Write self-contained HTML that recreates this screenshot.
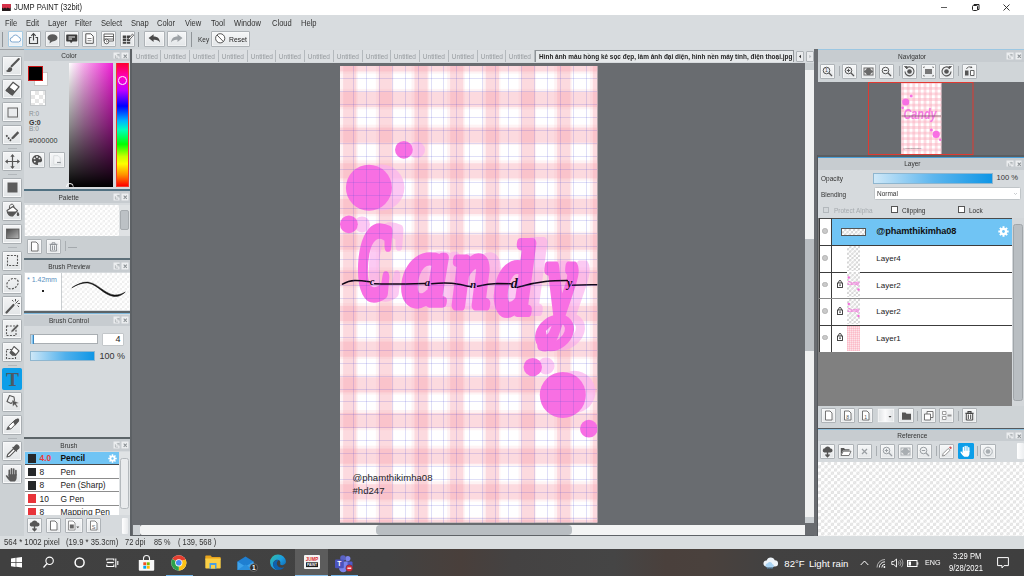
<!DOCTYPE html>
<html lang="en">
<head>
<meta charset="utf-8">
<title>JUMP PAINT (32bit)</title>
<style>
*{box-sizing:border-box;margin:0;padding:0}
html,body{width:1024px;height:576px;overflow:hidden;background:#fff}
body{position:relative;font-family:"Liberation Sans","DejaVu Sans",sans-serif;font-size:8.5px;color:#222;line-height:1}
.abs{position:absolute}
svg{display:block;overflow:visible}
#titlebar{left:0;top:0;width:1024px;height:15px;background:#fff}
#menubar{left:0;top:15px;width:1024px;height:15px;background:#d8dcdf}
#toolbar{left:0;top:30px;width:1024px;height:19px;background:linear-gradient(to right,#d0d5d8 210px,#d8dcdf 210px)}
#main{left:0;top:49px;width:1024px;height:487px}
#mainbg{left:0;top:49px;width:1024px;height:487px;background:#d0d5d8}
#statusbar{left:0;top:536px;width:1024px;height:13px;background:#d9dddf}
#taskbar{left:0;top:549px;width:1024px;height:27px;background:#343434}
.t{position:absolute;white-space:nowrap}
.btn{position:absolute;width:15px;height:15px;background:linear-gradient(#f6f7f8,#e3e6e8);border:1px solid #aeb3b7;border-radius:1px;box-shadow:inset 0 0 0 .6px #fafbfb}
.btn svg{position:absolute;left:0;top:0;width:13px;height:13px}
.tool{position:absolute;left:2px;width:20px;height:20.3px;background:linear-gradient(#f3f4f5,#e2e5e7);border:1px solid #a9aeb2;border-radius:1.5px;box-shadow:inset 0 0 0 1px #f8f9fa}
.tool svg{position:absolute;left:.5px;top:.6px;width:17px;height:17px}
.panel{position:absolute;background:#d6dadd}
.phead{position:absolute;left:0;top:0;height:12px;width:100%;background:#c7ccd0;border-top:1px solid #9cc7e2;text-align:center;font-size:7.5px;color:#333}
.phead span{position:relative;top:2px;display:inline-block;transform:scaleX(.87)}
.n{transform:scaleX(.9);transform-origin:0 50%}
.hic{position:absolute;top:1.5px;width:7.5px;height:7.5px;background:#eceef0;border:.5px solid #d9dcdf;border-radius:1.2px}
.hic svg{position:absolute;left:0;top:0;width:6.5px;height:6.5px}
.checker{background-color:#fff;background-image:linear-gradient(45deg,#e6e6e6 25%,transparent 25%,transparent 75%,#e6e6e6 75%),linear-gradient(45deg,#e6e6e6 25%,transparent 25%,transparent 75%,#e6e6e6 75%);background-size:7px 7px;background-position:0 0,3.5px 3.5px}
.menu{top:3.5px;font-size:8.6px;color:#333;transform:scaleX(.88);transform-origin:0 0}
.tab{position:absolute;top:1px;height:12px;width:28.75px;border-right:1px solid #b4b9bd;background:#dcdfe2;color:#969b9f;font-size:7px;text-align:center;overflow:hidden}
.tab span{position:relative;top:3px}
.sep{position:absolute;width:1px;background:#a9aeb2}
.thc{background-image:linear-gradient(45deg,#d4d4d4 25%,transparent 25%,transparent 75%,#d4d4d4 75%),linear-gradient(45deg,#d4d4d4 25%,transparent 25%,transparent 75%,#d4d4d4 75%)}
</style>
</head>
<body>
<!-- ===== title bar ===== -->
<div id="titlebar" class="abs">
  <svg class="abs" style="left:2.2px;top:3.8px" width="8.8" height="7" viewBox="0 0 8.8 7"><rect width="8.8" height="7" fill="#241a1c"/><path d="M0 0h8.8v3.6L7.3 4.6 5.8 3.6 4.4 4.6 3 3.6 1.5 4.6 0 3.6z" fill="#d8324a"/></svg>
  <div class="t" style="left:14px;top:3.9px;font-size:8.2px;color:#1a1a1a;transform:scaleX(.928);transform-origin:0 0">JUMP PAINT (32bit)</div>
  <svg class="abs" style="left:940px;top:3px" width="80" height="10" viewBox="0 0 80 10">
    <path d="M1 4.5h6" stroke="#333" stroke-width=".8" fill="none"/>
    <rect x="32.5" y="2.5" width="5" height="5" rx="1" stroke="#222" stroke-width="1" fill="none"/><path d="M34 2.5v-1h5v5h-1.4" stroke="#222" stroke-width="1" fill="none"/>
    <path d="M63.5 1.5l6 6M69.5 1.5l-6 6" stroke="#222" stroke-width=".9" fill="none"/>
  </svg>
</div>
<!-- ===== menu bar ===== -->
<div id="menubar" class="abs">
  <div class="t menu" style="left:4.5px">File</div>
  <div class="t menu" style="left:25.5px">Edit</div>
  <div class="t menu" style="left:47.5px">Layer</div>
  <div class="t menu" style="left:74.5px">Filter</div>
  <div class="t menu" style="left:100.5px">Select</div>
  <div class="t menu" style="left:130.5px">Snap</div>
  <div class="t menu" style="left:156.5px">Color</div>
  <div class="t menu" style="left:184.5px">View</div>
  <div class="t menu" style="left:211px">Tool</div>
  <div class="t menu" style="left:234px">Window</div>
  <div class="t menu" style="left:272px">Cloud</div>
  <div class="t menu" style="left:301px">Help</div>
</div>
<!-- ===== toolbar ===== -->
<div id="toolbar" class="abs">
  <div class="sep" style="left:2px;top:2px;height:15px;background:#8f9498"></div>
  <div class="btn" style="left:7.5px;top:1.3px;height:15.8px;border-color:#a6cbe3;background:linear-gradient(#f9fbfd,#e8eff5)"><svg viewBox="0 0 13 13"><path d="M3.6 10a2.3 2.3 0 01-.2-4.6 3.2 3.2 0 016.1-.3 2.5 2.5 0 01.2 4.9z" fill="#fff" stroke="#7fa8cf" stroke-width="1"/></svg></div>
  <div class="btn" style="left:26.2px;top:1.3px;height:15.8px"><svg viewBox="0 0 13 13"><path d="M4.5 5.5h-2v6h8v-6h-2" fill="none" stroke="#444" stroke-width="1.1"/><path d="M6.5 8.5v-6.5M4.3 3.8l2.2-2.3 2.2 2.3" fill="none" stroke="#444" stroke-width="1.1"/></svg></div>
  <div class="btn" style="left:44.9px;top:1.3px;height:15.8px"><svg viewBox="0 0 13 13"><ellipse cx="6.5" cy="5.8" rx="5" ry="3.6" fill="#5a5a5a"/><path d="M4 8.5l-.5 3 3-2.3z" fill="#5a5a5a"/></svg></div>
  <div class="btn" style="left:63.6px;top:1.3px;height:15.8px"><svg viewBox="0 0 13 13"><path d="M2 2.5h9.5a.8.8 0 01.8.8v5.4a.8.8 0 01-.8.8h-4l-1.5 1.8-1-1.8h-3a.8.8 0 01-.8-.8v-5.4a.8.8 0 01.8-.8z" fill="#3c3c3c"/><path d="M3.5 5h6.5M3.5 7h3.5" stroke="#f0f0f0" stroke-width="1"/></svg></div>
  <div class="btn" style="left:82.3px;top:1.3px;height:15.8px"><svg viewBox="0 0 13 13"><path d="M2.8 1.8h5l2.5 2.5v7h-7.5z" fill="#fff" stroke="#555" stroke-width="1" stroke-linejoin="round"/><path d="M4.5 6.5h4M4.5 8.7h4" stroke="#666" stroke-width=".8"/></svg></div>
  <div class="btn" style="left:101px;top:1.3px;height:15.8px"><svg viewBox="0 0 13 13"><path d="M2 2h9.5v7h-9.5zM2 4.5h9.5M2 7h9.5" fill="#fff" stroke="#555" stroke-width=".9"/><circle cx="4.5" cy="9.5" r="2.3" fill="#fff" stroke="#555" stroke-width=".9"/><path d="M4.5 8.3v1.4h1" stroke="#555" stroke-width=".7" fill="none"/></svg></div>
  <div class="btn" style="left:119.7px;top:1.3px;height:15.8px"><svg viewBox="0 0 13 13"><path d="M1.8 3.5h3.4v2.4h-3.4zM5.9 3.5h3.3v2.4h-3.3zM1.8 6.6h3.4v2.4h-3.4zM5.9 6.6h3.3v2.4h-3.3zM1.8 9.7h3.4v2h-3.4zM5.9 9.7h3.3v2h-3.3z" fill="#444"/><path d="M7.5 6.5l4-4.5 1.2 1-4 4.5-1.6.5z" fill="#fff" stroke="#444" stroke-width=".8"/></svg></div>
  <div class="sep" style="left:138px;top:2px;height:15px;background:#8f9498"></div>
  <div class="btn" style="left:144.4px;top:1.3px;height:15.8px;width:20.2px"><svg viewBox="0 0 18 13" style="width:18.2px"><path d="M3.5 6l5-3.8v2.3c4 0 6 2 6.5 6-1.5-2.3-3.5-3-6.5-2.8v2.3z" fill="#4a4a4a"/></svg></div>
  <div class="btn" style="left:167.4px;top:1.3px;height:15.8px;width:20px"><svg viewBox="0 0 18 13" style="width:18px"><path d="M14.5 6l-5-3.8v2.3c-4 0-6 2-6.5 6 1.5-2.3 3.5-3 6.5-2.8v2.3z" fill="#9da2a6"/></svg></div>
  <div class="sep" style="left:190.6px;top:2px;height:15px;background:#8f9498"></div>
  <div class="t n" style="left:198px;top:6px;font-size:7.2px;color:#333">Key</div>
  <div class="btn" style="left:211.4px;top:1.3px;height:15.8px;width:39px"><svg viewBox="0 0 37 13" style="width:37px"><circle cx="8.2" cy="6.3" r="4.6" fill="#fff" stroke="#444" stroke-width=".9"/><path d="M5 3l6.4 6.6" stroke="#444" stroke-width=".9"/></svg><span class="t n" style="left:16.8px;top:3.3px;font-size:7.6px;color:#222">Reset</span></div>
</div>
<div id="mainbg" class="abs"></div>
<!-- ===== tool column ===== -->
<div id="toolcol" class="abs" style="left:0;top:49px;width:24px;height:487px;background:#ccd1d4">
  <div class="abs" style="left:0;top:0;width:24px;height:1px;background:#9da2a6"></div>
  <!-- brush -->
  <div class="tool" style="top:6.7px"><svg viewBox="0 0 17 17"><path d="M14.8 2L7.6 9.300" stroke="#555" stroke-width="2.100" stroke-linecap="round" fill="none"/><path d="M1.800 13.800c1.600-.2 2.100-1.300 2.600-2.500.7-1.500 2.700-1.500 3.500-.3.900 1.500 0 3.300-1.900 3.900-1.600.5-3.300.1-4.200-1.100z" fill="#555"/></svg></div>
  <!-- eraser -->
  <div class="tool" style="top:29.9px"><svg viewBox="0 0 17 17"><path d="M9 2.300l6 4.500-6.800 8.200-6-4.500z" fill="#fff" stroke="#555" stroke-width="1.300" stroke-linejoin="round"/><path d="M5 7.200l6 4.500-2.800 3.300-6-4.500z" fill="#555" stroke="#555" stroke-width="1" stroke-linejoin="round"/></svg></div>
  <!-- shape rect -->
  <div class="tool" style="top:53.0px"><svg viewBox="0 0 17 17"><rect x="4" y="4" width="9.5" height="9" fill="#e9ebed" stroke="#666" stroke-width="1"/></svg></div>
  <!-- polyline pen -->
  <div class="tool" style="top:76px"><svg viewBox="0 0 17 17"><path d="M2.300 8.300l4 5 2.500-2.800" stroke="#444" stroke-width="1.700" stroke-dasharray="1.700 1.200" fill="none"/><path d="M8.300 9.800l5.200-5.500 1.700 1.600-5.300 5.500-2.300.8z" fill="#555"/></svg></div>
  <div class="abs" style="left:8px;top:98.7px;width:9px;height:1px;background:#b2b7bb"></div>
  <!-- move -->
  <div class="tool" style="top:102.2px"><svg viewBox="0 0 17 17"><path d="M8.5 2v13M2 8.5h13" stroke="#555" stroke-width="1.2" fill="none"/><path d="M8.5 1l2.2 2.8H6.3zM8.5 16l2.2-2.8H6.3zM1 8.5l2.8-2.2v4.4zM16 8.5l-2.8-2.2v4.4z" fill="#555"/></svg></div>
  <div class="abs" style="left:8px;top:125.0px;width:9px;height:1px;background:#b2b7bb"></div>
  <!-- fill rect -->
  <div class="tool" style="top:128.5px"><svg viewBox="0 0 17 17"><rect x="3.5" y="3.5" width="10" height="10" fill="#5c5c5c"/></svg></div>
  <!-- bucket -->
  <div class="tool" style="top:151.7px"><svg viewBox="0 0 17 17"><path d="M3 8.5l6-4 4.5 4.2-5 5.3c-2.5.5-5.2-2-5.5-5.5z" fill="#fff" stroke="#555" stroke-width="1.1" stroke-linejoin="round"/><path d="M3.2 9.5h9.5l-4.2 4.4c-2.6.3-4.7-1.7-5.3-4.4z" fill="#555"/><path d="M5.5 6.5c-.5-2.5.8-4.3 2.3-4.3s2.3 1.3 2 3" stroke="#555" stroke-width="1" fill="none"/><path d="M13.8 9.5c.9 1.3 1.5 2.3 1.5 3.2a1.3 1.3 0 01-2.6 0c0-.9.4-1.9 1.1-3.2z" fill="#555"/></svg></div>
  <!-- gradient -->
  <div class="tool" style="top:174.7px"><svg viewBox="0 0 17 17"><defs><linearGradient id="gt" x1="0" y1="0" x2="1" y2="1"><stop offset="0" stop-color="#4a4a4a"/><stop offset="1" stop-color="#b5b5b5"/></linearGradient></defs><rect x="2.5" y="4" width="12.5" height="9.5" fill="url(#gt)" stroke="#555" stroke-width=".8"/></svg></div>
  <div class="abs" style="left:8px;top:197.7px;width:9px;height:1px;background:#b2b7bb"></div>
  <!-- select rect -->
  <div class="tool" style="top:201.5px"><svg viewBox="0 0 17 17"><rect x="3.5" y="3.5" width="10" height="10" fill="none" stroke="#555" stroke-width="1.1" stroke-dasharray="2 1.3"/></svg></div>
  <!-- lasso -->
  <div class="tool" style="top:224.5px"><svg viewBox="0 0 17 17"><ellipse cx="8.5" cy="8.7" rx="6.2" ry="4.7" transform="rotate(-35 8.5 8.7)" fill="none" stroke="#555" stroke-width="1.1" stroke-dasharray="2 1.3"/></svg></div>
  <!-- wand -->
  <div class="tool" style="top:247.2px"><svg viewBox="0 0 17 17"><path d="M2.5 14.5l7-7.5" stroke="#555" stroke-width="2.2" stroke-linecap="round"/><path d="M11.5 5.5l3-3M11.5 3.3V1M13.7 5.5H16M9.5 3.5l-1.5-1.5M13.5 7.5l1.5 1.5" stroke="#555" stroke-width="1"/></svg></div>
  <!-- select pen -->
  <div class="tool" style="top:270.2px"><svg viewBox="0 0 17 17"><rect x="2.5" y="5" width="9.5" height="9.5" fill="none" stroke="#555" stroke-width="1.1" stroke-dasharray="2 1.3"/><path d="M7.5 9.3l5.8-6 1.6 1.5-5.9 6-2.2.8z" fill="#555" stroke="#eef0f1" stroke-width=".5"/></svg></div>
  <!-- select eraser -->
  <div class="tool" style="top:293.0px"><svg viewBox="0 0 17 17"><rect x="2.5" y="5.5" width="9" height="9" fill="none" stroke="#555" stroke-width="1.1" stroke-dasharray="2 1.3"/><path d="M10 2.5l5 4.3-3.6 4.5H8.6L6 8.7z" fill="#fff" stroke="#555" stroke-width="1.1" stroke-linejoin="round"/><path d="M7.7 6.5l4.6 3.8-1 1H8.6L6 8.7z" fill="#555"/></svg></div>
  <div class="abs" style="left:8px;top:315.7px;width:9px;height:1px;background:#b2b7bb"></div>
  <!-- text (active) -->
  <div class="tool" style="top:319.2px;background:#0c9ee9;border-color:#0c9ee9;height:22px;box-shadow:none"><svg viewBox="0 0 17 17"><text x="8.5" y="16" text-anchor="middle" font-family="'Liberation Serif',serif" font-size="19.5" font-weight="bold" fill="#4b5b66">T</text></svg></div>
  <!-- operation -->
  <div class="tool" style="top:342.7px"><svg viewBox="0 0 17 17"><path d="M5.5 2.5l4.5 1.5 .5 3.5-3.5 3-4-2z" fill="none" stroke="#555" stroke-width="1.1" stroke-linejoin="round"/><path d="M8 7l7 3-3 .8 2 3-1.3.8-1.9-3-2 2z" fill="#555" stroke="#eef0f1" stroke-width=".4"/></svg></div>
  <!-- divide / marker -->
  <div class="tool" style="top:365.9px"><svg viewBox="0 0 17 17"><path d="M2.8 13.5l1.7-3.3 7-6.5c1.2-1 3.2.8 2.2 2.2l-6.7 7z" fill="#fff" stroke="#555" stroke-width="1"/><path d="M8.8 5.6l5-3.4c1.4.3 1.8 1.7 1 3.2l-3.6 4z" fill="#555"/><path d="M2.8 13.5l1.7-3.3 2 2.3z" fill="#555"/></svg></div>
  <div class="abs" style="left:8px;top:389.0px;width:9px;height:1px;background:#b2b7bb"></div>
  <!-- eyedropper -->
  <div class="tool" style="top:392.2px"><svg viewBox="0 0 17 17"><path d="M3 14l.7-2.5 6-6 1.8 1.8-6 6z" fill="#fff" stroke="#555" stroke-width="1.1" stroke-linejoin="round"/><path d="M9 4.5l3.5 3.5M12 2.2c1-1 3.8 1.5 2.8 2.8l-2.5 2.2-2.5-2.5z" fill="#555" stroke="#555" stroke-width="1.3" stroke-linecap="round"/></svg></div>
  <!-- hand -->
  <div class="tool" style="top:415.2px"><svg viewBox="0 0 17 17"><path d="M5.300 9.500V4.300M7.500 8.500V2.800M9.700 8.500V3M11.900 9V4.600" stroke="#5a5a5a" stroke-width="1.650" stroke-linecap="round" fill="none"/><path d="M4.500 8.300h8.200v3.200c0 1.900-.9 3.300-1.900 4H6.400C5 14.500 3.100 12.100 1.900 10.300c-.5-.9.600-1.600 1.400-.8L4.500 10.900z" fill="#5a5a5a"/></svg></div>
</div>
<!-- ===== left panels ===== -->
<div id="leftpanels" class="abs" style="left:24px;top:49px;width:106px;height:487px;background:#d6dadd">
  <!-- Color panel -->
  <div class="panel" style="left:0;top:0;width:106px;height:140px">
    <div class="phead"><span style="left:-8px">Color</span>
      <div class="hic" style="left:88.5px"><svg viewBox="0 0 7 7"><path d="M1.5 2.5v3h3M3 1.5h2.5V4M5.5 1.5L3.2 3.8" stroke="#9aa0a4" stroke-width=".7" fill="none"/></svg></div>
      <div class="hic" style="left:97px"><svg viewBox="0 0 7 7"><path d="M1.8 1.8l3.4 3.4M5.2 1.8L1.8 5.2" stroke="#8b9195" stroke-width="1.1" fill="none"/></svg></div>
    </div>
    <div class="abs" style="left:9.5px;top:22.5px;width:14.5px;height:14px;background:#fff;border:.5px solid #c8c8c8"></div>
    <div class="abs" style="left:3.8px;top:17px;width:15.2px;height:14.8px;background:#000;border:1.2px solid #c81414"></div>
    <div class="abs checker" style="left:6px;top:41.2px;width:15.8px;height:15.6px;border:1px solid #c3c7ca;background-size:8px 8px;background-position:0 0,4px 4px"></div>
    <div class="t" style="left:5px;top:62px;font-size:6.5px;color:#8a8f93">R:0</div>
    <div class="t" style="left:5px;top:69.5px;font-size:7px;color:#333;font-weight:bold">G:0</div>
    <div class="t" style="left:5px;top:76.5px;font-size:6.5px;color:#8a8f93">B:0</div>
    <div class="t" style="left:5px;top:87.8px;font-size:7.2px;color:#333;letter-spacing:.1px">#000000</div>
    <div class="btn" style="left:5.2px;top:103.2px;width:16px;height:16px"><svg viewBox="0 0 13 13" style="width:14px;height:14px"><path d="M6.5 1.8a4.7 4.7 0 100 9.4c1 0 1.2-.6.9-1.2-.4-.8.1-1.5 1-1.5h1.3c.9 0 1.5-.7 1.5-1.7 0-2.8-2.1-5-4.7-5z" fill="#4f4f4f"/><circle cx="4.2" cy="5" r=".9" fill="#f0f0f0"/><circle cx="6.5" cy="3.8" r=".9" fill="#f0f0f0"/><circle cx="8.8" cy="5" r=".9" fill="#f0f0f0"/><circle cx="4.5" cy="8" r=".9" fill="#f0f0f0"/></svg></div>
    <div class="btn" style="left:24.6px;top:103.2px;width:16px;height:16px"><svg viewBox="0 0 13 13" style="width:14px;height:14px"><path d="M3.5 2.5h4l2 2v6h-6z" fill="#f4f5f6" stroke="#d2d5d8" stroke-width=".7"/><path d="M6.5 8.8h3.5" stroke="#8c9195" stroke-width="1.1"/></svg></div>
    <!-- SV square -->
    <div class="abs" style="left:45.3px;top:14px;width:43.7px;height:124px;background:linear-gradient(to bottom,rgba(0,0,0,0) 0%,rgba(0,0,0,.46) 50%,rgba(0,0,0,.86) 88%,#000 100%),linear-gradient(to right,#fff 0%,#f8a8ec 35%,#f01fd6 100%)"></div>
    <!-- hue strip -->
    <div class="abs" style="left:91.8px;top:14px;width:13.5px;height:124px;border:1px solid #f03a2a;border-top:none;background:linear-gradient(to bottom,#ff0030 0%,#ff00c8 12%,#c000ff 22%,#0000ff 35%,#00b4ff 47%,#00ffc0 54%,#00ff00 66%,#c8ff00 76%,#ffff00 82%,#ff9000 91%,#ff0000 100%)"></div>
    <div class="abs" style="left:94.1px;top:27.3px;width:8.6px;height:8.6px;border:1.9px solid #fff;border-radius:50%"></div>
    <div class="abs" style="left:41.5px;top:133.8px;width:8px;height:8px;border:1.7px solid #fff;border-radius:50%;clip-path:inset(0 0 3.8px 0)"></div>
  </div>
  <div class="abs" style="left:0;top:139.5px;width:106px;height:2.5px;background:#517182"></div>
  <!-- Palette panel -->
  <div class="panel" style="left:0;top:142px;width:106px;height:67px">
    <div class="phead" style="border-top:none"><span style="left:-8px;top:2.5px">Palette</span>
      <div class="hic" style="left:88.5px;top:2px"><svg viewBox="0 0 7 7"><path d="M1.5 2.5v3h3M3 1.5h2.5V4M5.5 1.5L3.2 3.8" stroke="#9aa0a4" stroke-width=".7" fill="none"/></svg></div>
      <div class="hic" style="left:97px;top:2px"><svg viewBox="0 0 7 7"><path d="M1.8 1.8l3.4 3.4M5.2 1.8L1.8 5.2" stroke="#8b9195" stroke-width="1.1" fill="none"/></svg></div>
    </div>
    <div class="abs checker" style="left:.5px;top:13.5px;width:94px;height:31.5px;background-image:linear-gradient(45deg,#efefef 25%,transparent 25%,transparent 75%,#efefef 75%),linear-gradient(45deg,#efefef 25%,transparent 25%,transparent 75%,#efefef 75%);background-size:5px 5px;background-position:0 0,2.5px 2.5px"></div>
    <div class="abs" style="left:94.5px;top:13.5px;width:11.5px;height:31.5px;background:#dfe2e4"></div>
    <div class="abs" style="left:95.5px;top:19px;width:9.5px;height:20px;background:#bcc1c5;border:.5px solid #a6abaf;border-radius:2px"></div>
    <div class="abs" style="left:0;top:45px;width:106px;height:22px;background:#cacfd2"></div>
    <div class="btn" style="left:3px;top:48px"><svg viewBox="0 0 13 13"><path d="M3.5 2h4.5l2 2v7h-6.5z" fill="#fff" stroke="#666" stroke-width=".9" stroke-linejoin="round"/></svg></div>
    <div class="btn" style="left:21.5px;top:48px"><svg viewBox="0 0 13 13"><path d="M3.5 4.5h6v6.5h-6zM2.5 4.3h8M5 4V2.8h3V4M5.5 5.5v4.5M7.5 5.5v4.5" fill="none" stroke="#8b9094" stroke-width=".9"/></svg></div>
    <div class="sep" style="left:40.5px;top:50px;height:10px"></div>
    <div class="abs" style="left:44px;top:55.5px;width:9px;height:1px;background:#a4a9ad"></div>
  </div>
  <div class="abs" style="left:0;top:208.8px;width:106px;height:2.5px;background:#5c6e78"></div>
  <!-- Brush Preview panel -->
  <div class="panel" style="left:0;top:211.3px;width:106px;height:51px">
    <div class="phead" style="border-top:none"><span style="left:-8px;top:2.5px">Brush Preview</span>
      <div class="hic" style="left:88.5px;top:2px"><svg viewBox="0 0 7 7"><path d="M1.5 2.5v3h3M3 1.5h2.5V4M5.5 1.5L3.2 3.8" stroke="#9aa0a4" stroke-width=".7" fill="none"/></svg></div>
      <div class="hic" style="left:97px;top:2px"><svg viewBox="0 0 7 7"><path d="M1.8 1.8l3.4 3.4M5.2 1.8L1.8 5.2" stroke="#8b9195" stroke-width="1.1" fill="none"/></svg></div>
    </div>
    <div class="abs" style="left:.5px;top:12.5px;width:37px;height:37.5px;background:#fff;border-right:1px solid #c9cdd0"></div>
    <div class="t" style="left:3px;top:15.5px;font-size:7px;color:#5b8fc0">* 1.42mm</div>
    <div class="abs" style="left:18.3px;top:30.2px;width:1.4px;height:1.4px;background:#222"></div>
    <div class="abs checker" style="left:37.5px;top:12.5px;width:68.5px;height:37.5px;background-image:linear-gradient(45deg,#efefef 25%,transparent 25%,transparent 75%,#efefef 75%),linear-gradient(45deg,#efefef 25%,transparent 25%,transparent 75%,#efefef 75%);background-size:5px 5px;background-position:0 0,2.5px 2.5px"></div>
    <svg class="abs" style="left:37.5px;top:12.5px" width="68.5" height="37.5" viewBox="61.5 273 68.5 37.5"><path d="M71.3 287.8C77 284.5 83 282 88.5 283.2 97 285 104 295.5 113.5 296.5 118 297 122 294.5 124.8 292 121.5 294 118 295.2 114 295 105 294.3 98 284.3 89 282.4 83 281.2 77 284 71.3 287.8z" fill="#111" stroke="#111" stroke-width=".5"/></svg>
  </div>
  <div class="abs" style="left:0;top:262.3px;width:106px;height:2px;background:#5c6468"></div>
  <div class="abs" style="left:0;top:264.3px;width:106px;height:1.2px;background:#7fb8dc"></div>
  <!-- Brush Control panel -->
  <div class="panel" style="left:0;top:265.5px;width:106px;height:122px">
    <div class="phead" style="border-top:none;height:11.5px"><span style="left:-8px;top:2px">Brush Control</span>
      <div class="hic" style="left:88.5px"><svg viewBox="0 0 7 7"><path d="M1.5 2.5v3h3M3 1.5h2.5V4M5.5 1.5L3.2 3.8" stroke="#9aa0a4" stroke-width=".7" fill="none"/></svg></div>
      <div class="hic" style="left:97px"><svg viewBox="0 0 7 7"><path d="M1.8 1.8l3.4 3.4M5.2 1.8L1.8 5.2" stroke="#8b9195" stroke-width="1.1" fill="none"/></svg></div>
    </div>
    <div class="abs" style="left:6px;top:19.8px;width:67.5px;height:10.2px;background:#fff;border:1px solid #a9aeb2"></div>
    <div class="abs" style="left:6.8px;top:20.5px;width:3px;height:8.8px;background:linear-gradient(to right,#cfe6f6,#6cb6e6);border-right:1px solid #3a86c0"></div>
    <div class="abs" style="left:77.8px;top:18.8px;width:22px;height:12.5px;background:#fff;border:1px solid #c3c7ca;border-radius:1px"></div>
    <div class="t" style="left:91.5px;top:20.8px;font-size:9px;color:#222">4</div>
    <div class="abs" style="left:6px;top:36px;width:65px;height:10px;background:linear-gradient(to right,#cde7f8,#4fb0ec 55%,#0f96e6);border:1px solid #8fb6cf"></div>
    <div class="t" style="left:75.5px;top:37.3px;font-size:9px;color:#333">100 %</div>
  </div>
  <div class="abs" style="left:0;top:387.5px;width:106px;height:2.5px;background:#5c6468"></div>
  <!-- Brush panel -->
  <div class="panel" style="left:0;top:390px;width:106px;height:97px">
    <div class="phead" style="border-top:none"><span style="left:-8px;top:2.5px">Brush</span>
      <div class="hic" style="left:88.5px;top:2px"><svg viewBox="0 0 7 7"><path d="M1.5 2.5v3h3M3 1.5h2.5V4M5.5 1.5L3.2 3.8" stroke="#9aa0a4" stroke-width=".7" fill="none"/></svg></div>
      <div class="hic" style="left:97px;top:2px"><svg viewBox="0 0 7 7"><path d="M1.8 1.8l3.4 3.4M5.2 1.8L1.8 5.2" stroke="#8b9195" stroke-width="1.1" fill="none"/></svg></div>
    </div>
    <div class="abs" style="left:1px;top:13px;width:93.5px;height:62.8px;background:#fff;overflow:hidden;font-size:8.4px;color:#222">
      <div class="abs" style="left:0;top:0;width:93.5px;height:13.3px;background:#70c4f4;border-bottom:1px solid #4a4a4a"></div>
      <div class="abs" style="left:0;top:26px;width:93.5px;height:1px;background:#8d8d8d"></div>
      <div class="abs" style="left:0;top:39.3px;width:93.5px;height:1px;background:#8d8d8d"></div>
      <div class="abs" style="left:0;top:52.8px;width:93.5px;height:1px;background:#8d8d8d"></div>
      <div class="abs" style="left:2.5px;top:2.2px;width:8.5px;height:8.5px;background:#26282a"></div>
      <div class="abs" style="left:2.5px;top:15.7px;width:8.5px;height:8.5px;background:#26282a"></div>
      <div class="abs" style="left:2.5px;top:29px;width:8.5px;height:8.5px;background:#26282a"></div>
      <div class="abs" style="left:2.5px;top:42.4px;width:8.5px;height:8.5px;background:#e8343a"></div>
      <div class="abs" style="left:2.5px;top:55.7px;width:8.5px;height:8.5px;background:#e8343a"></div>
      <div class="t" style="left:14.5px;top:2.3px;color:#ee3a3a;font-weight:bold">4.0</div>
      <div class="t" style="left:14.5px;top:16px">8</div>
      <div class="t" style="left:14.5px;top:29.3px">8</div>
      <div class="t" style="left:14.5px;top:42.7px">10</div>
      <div class="t" style="left:14.5px;top:56px">8</div>
      <div class="t" style="left:35.5px;top:2.3px;font-weight:bold;color:#111">Pencil</div>
      <div class="t" style="left:35.5px;top:16px">Pen</div>
      <div class="t" style="left:35.5px;top:29.3px">Pen (Sharp)</div>
      <div class="t" style="left:35.5px;top:42.7px">G Pen</div>
      <div class="t" style="left:35.5px;top:56px">Mapping Pen</div>
      <svg class="abs" style="left:82.5px;top:2px" width="9" height="9" viewBox="0 0 10 10"><g fill="#fff"><circle cx="5" cy="5" r="3.3"/><g stroke="#fff" stroke-width="1.7"><path d="M5 .3v9.4M.3 5h9.4M1.7 1.7l6.6 6.6M8.3 1.7L1.7 8.3"/></g></g><circle cx="5" cy="5" r="1.3" fill="#70c4f4"/></svg>
    </div>
    <div class="abs" style="left:94.5px;top:13px;width:11.5px;height:63px;background:#dfe2e4"></div>
    <div class="abs" style="left:95.5px;top:19px;width:9.5px;height:50.5px;background:#e9ebed;border:.5px solid #b4b9bd;border-radius:2.5px"></div>
    <div class="btn" style="left:3px;top:78.8px"><svg viewBox="0 0 13 13"><path d="M3.3 7.5a2.2 2.2 0 01.5-4.3 3 3 0 015.6.3 2 2 0 01.3 4z" fill="#555"/><path d="M6.5 6v5.5M4.5 9.5l2 2.2 2-2.2" stroke="#555" stroke-width="1.4" fill="none"/></svg></div>
    <div class="btn" style="left:21.8px;top:78.8px"><svg viewBox="0 0 13 13"><path d="M3.5 2h4.5l2 2v7h-6.5z" fill="#fff" stroke="#666" stroke-width=".9" stroke-linejoin="round"/></svg></div>
    <div class="btn" style="left:40.8px;top:78.8px;width:18px"><svg viewBox="0 0 13 13"><path d="M2.5 2h4.5l2 2v7h-6.5z" fill="#fff" stroke="#888" stroke-width=".9" stroke-linejoin="round"/><rect x="3.8" y="5.5" width="4" height="4" fill="#666"/><path d="M10.3 7.5h3l-1.5 1.8z" fill="#555"/></svg></div>
    <div class="btn" style="left:62.2px;top:78.8px"><svg viewBox="0 0 13 13"><path d="M3.5 2h4.5l2 2v7h-6.5z" fill="#fff" stroke="#777" stroke-width=".9" stroke-linejoin="round"/><text x="6.7" y="9.8" font-size="5.5" text-anchor="middle" fill="#666" font-family="'Liberation Sans',sans-serif">S</text></svg></div>
    <div class="abs" style="left:98.2px;top:78.5px;width:5.5px;height:16px;background:linear-gradient(to right,#fff,#e8eaec);border-radius:1px"></div>
  </div>
</div>
<!-- ===== main area ===== -->
<div id="main" class="abs">
<div class="abs" style="left:130px;top:0;width:3px;height:487px;background:#696c70"></div>
<div class="abs" style="left:130.2px;top:0;width:2.3px;height:487px;background:#5d6165"></div>
<div id="canvasarea" class="abs" style="left:132px;top:0;width:692px;height:487px;background:#696c70">
<div class="abs" style="left:0;top:0;width:686px;height:14px;background:#d7dbde"></div>
<div class="tab" style="left:0.50px"><span style="display:inline-block;transform:scaleX(.93)">Untitled</span></div>
<div class="tab" style="left:29.25px"><span style="display:inline-block;transform:scaleX(.93)">Untitled</span></div>
<div class="tab" style="left:58.00px"><span style="display:inline-block;transform:scaleX(.93)">Untitled</span></div>
<div class="tab" style="left:86.75px"><span style="display:inline-block;transform:scaleX(.93)">Untitled</span></div>
<div class="tab" style="left:115.50px"><span style="display:inline-block;transform:scaleX(.93)">Untitled</span></div>
<div class="tab" style="left:144.25px"><span style="display:inline-block;transform:scaleX(.93)">Untitled</span></div>
<div class="tab" style="left:173.00px"><span style="display:inline-block;transform:scaleX(.93)">Untitled</span></div>
<div class="tab" style="left:201.75px"><span style="display:inline-block;transform:scaleX(.93)">Untitled</span></div>
<div class="tab" style="left:230.50px"><span style="display:inline-block;transform:scaleX(.93)">Untitled</span></div>
<div class="tab" style="left:259.25px"><span style="display:inline-block;transform:scaleX(.93)">Untitled</span></div>
<div class="tab" style="left:288.00px"><span style="display:inline-block;transform:scaleX(.93)">Untitled</span></div>
<div class="tab" style="left:316.75px"><span style="display:inline-block;transform:scaleX(.93)">Untitled</span></div>
<div class="tab" style="left:345.50px"><span style="display:inline-block;transform:scaleX(.93)">Untitled</span></div>
<div class="tab" style="left:374.25px"><span style="display:inline-block;transform:scaleX(.93)">Untitled</span></div>
<div class="tab" style="left:403px;width:258.5px;background:#e6e9eb;color:#222;font-weight:bold;font-size:7.1px;border:1px solid #8f9498;border-bottom:none;text-align:left;padding-left:3px;white-space:nowrap;letter-spacing:0"><span style="display:inline-block;transform:scaleX(.908);transform-origin:0 50%">Hình ảnh màu hồng kẻ sọc đẹp, làm ảnh đại diện, hình nền máy tính, điện thoại.jpg</span></div>
<div class="abs" style="left:663.5px;top:1.5px;width:8px;height:11px;background:#e9ebed;border:1px solid #aeb3b7;border-radius:1px"><svg width="6" height="9" viewBox="0 0 6 9"><path d="M4 2.7L2 4.5l2 1.8z" fill="#333"/></svg></div>
<div class="abs" style="left:674px;top:1.5px;width:8px;height:11px;background:#e9ebed;border:1px solid #aeb3b7;border-radius:1px"><svg width="6" height="9" viewBox="0 0 6 9"><path d="M2.3 2.7l2 1.8-2 1.8z" fill="#b5babd"/></svg></div>
<div class="abs" style="left:673px;top:14px;width:9px;height:460px;background:#f0f1f1"></div>
<div class="abs" style="left:673px;top:14px;width:9px;height:7px;background:#c9ced1"></div>
<div class="abs" style="left:673px;top:189.5px;width:9px;height:112px;background:#b9bec2"></div>
<div class="abs" style="left:673px;top:468px;width:9px;height:6px;background:#c9ced1"></div>
<div class="abs" style="left:.7px;top:475.9px;width:7px;height:9.8px;background:#cfd3d6"></div>
<div class="abs" style="left:7.5px;top:475.9px;width:665.5px;height:9.8px;background:#f3f4f4;border-radius:2px 0 0 2px"></div>
<div class="abs" style="left:0;top:485.7px;width:683px;height:1.3px;background:#5f6367"></div>
<div class="abs" style="left:244px;top:475.9px;width:196px;height:9.8px;background:#b9bec2;border-radius:4px"></div>
<svg class="abs" style="left:208.0px;top:16.6px" width="257.4" height="456.6" viewBox="340.0 65.6 257.4 456.6">
<defs><clipPath id="cv"><rect x="340.0" y="65.6" width="257.4" height="456.6"/></clipPath><filter id="soft" x="-5%" y="-5%" width="110%" height="110%"><feGaussianBlur stdDeviation="0.55"/></filter></defs>
<rect x="340.0" y="65.6" width="257.4" height="456.6" fill="#fff"/>
<g clip-path="url(#cv)">
<g fill="#f99fab" filter="url(#soft)">
<rect x="340.20" y="60.599999999999994" width="17.6" height="466.6" fill-opacity=".13"/>
<rect x="343.10" y="60.599999999999994" width="13.2" height="466.6" fill-opacity=".29"/>
<rect x="375.87" y="60.599999999999994" width="17.6" height="466.6" fill-opacity=".13"/>
<rect x="378.77" y="60.599999999999994" width="13.2" height="466.6" fill-opacity=".29"/>
<rect x="411.54" y="60.599999999999994" width="17.6" height="466.6" fill-opacity=".13"/>
<rect x="414.44" y="60.599999999999994" width="13.2" height="466.6" fill-opacity=".29"/>
<rect x="447.21" y="60.599999999999994" width="17.6" height="466.6" fill-opacity=".13"/>
<rect x="450.11" y="60.599999999999994" width="13.2" height="466.6" fill-opacity=".29"/>
<rect x="482.88" y="60.599999999999994" width="17.6" height="466.6" fill-opacity=".13"/>
<rect x="485.78" y="60.599999999999994" width="13.2" height="466.6" fill-opacity=".29"/>
<rect x="518.55" y="60.599999999999994" width="17.6" height="466.6" fill-opacity=".13"/>
<rect x="521.45" y="60.599999999999994" width="13.2" height="466.6" fill-opacity=".29"/>
<rect x="554.22" y="60.599999999999994" width="17.6" height="466.6" fill-opacity=".13"/>
<rect x="557.12" y="60.599999999999994" width="13.2" height="466.6" fill-opacity=".29"/>
<rect x="589.89" y="60.599999999999994" width="17.6" height="466.6" fill-opacity=".13"/>
<rect x="592.79" y="60.599999999999994" width="13.2" height="466.6" fill-opacity=".29"/>
<rect x="335.0" y="52.90" width="267.4" height="20.3" fill-opacity=".13"/>
<rect x="335.0" y="55.80" width="267.4" height="15.2" fill-opacity=".29"/>
<rect x="335.0" y="88.57" width="267.4" height="20.3" fill-opacity=".13"/>
<rect x="335.0" y="91.47" width="267.4" height="15.2" fill-opacity=".29"/>
<rect x="335.0" y="124.24" width="267.4" height="20.3" fill-opacity=".13"/>
<rect x="335.0" y="127.14" width="267.4" height="15.2" fill-opacity=".29"/>
<rect x="335.0" y="159.91" width="267.4" height="20.3" fill-opacity=".13"/>
<rect x="335.0" y="162.81" width="267.4" height="15.2" fill-opacity=".29"/>
<rect x="335.0" y="195.58" width="267.4" height="20.3" fill-opacity=".13"/>
<rect x="335.0" y="198.48" width="267.4" height="15.2" fill-opacity=".29"/>
<rect x="335.0" y="231.25" width="267.4" height="20.3" fill-opacity=".13"/>
<rect x="335.0" y="234.15" width="267.4" height="15.2" fill-opacity=".29"/>
<rect x="335.0" y="266.92" width="267.4" height="20.3" fill-opacity=".13"/>
<rect x="335.0" y="269.82" width="267.4" height="15.2" fill-opacity=".29"/>
<rect x="335.0" y="302.59" width="267.4" height="20.3" fill-opacity=".13"/>
<rect x="335.0" y="305.49" width="267.4" height="15.2" fill-opacity=".29"/>
<rect x="335.0" y="338.26" width="267.4" height="20.3" fill-opacity=".13"/>
<rect x="335.0" y="341.16" width="267.4" height="15.2" fill-opacity=".29"/>
<rect x="335.0" y="373.93" width="267.4" height="20.3" fill-opacity=".13"/>
<rect x="335.0" y="376.83" width="267.4" height="15.2" fill-opacity=".29"/>
<rect x="335.0" y="409.60" width="267.4" height="20.3" fill-opacity=".13"/>
<rect x="335.0" y="412.50" width="267.4" height="15.2" fill-opacity=".29"/>
<rect x="335.0" y="445.27" width="267.4" height="20.3" fill-opacity=".13"/>
<rect x="335.0" y="448.17" width="267.4" height="15.2" fill-opacity=".29"/>
<rect x="335.0" y="480.94" width="267.4" height="20.3" fill-opacity=".13"/>
<rect x="335.0" y="483.84" width="267.4" height="15.2" fill-opacity=".29"/>
<rect x="335.0" y="516.61" width="267.4" height="20.3" fill-opacity=".13"/>
<rect x="335.0" y="519.51" width="267.4" height="15.2" fill-opacity=".29"/>
</g>
<g fill="#fbb0ee" fill-opacity=".7">
<circle cx="416.7" cy="149.4" r="8.3"/><circle cx="381.4" cy="187.2" r="23"/><circle cx="362" cy="224" r="8"/>
<circle cx="546" cy="365.5" r="8.5"/><circle cx="574.4" cy="391.4" r="21"/>
</g>
<g fill="#f86fe3">
<circle cx="403.9" cy="149.4" r="8.9"/><circle cx="368.9" cy="187.3" r="23"/><circle cx="348.9" cy="223.9" r="8.9"/>
<circle cx="532.8" cy="366.7" r="9.2"/><circle cx="562.8" cy="394.7" r="23"/><circle cx="588.9" cy="428.3" r="8.9"/>
</g>
<g font-family="'Liberation Serif',serif" font-style="italic" font-size="100" stroke-linejoin="round" stroke-linecap="round">
<g fill="#fba8ec" stroke="#fba8ec" stroke-width="9" opacity=".6" style="vector-effect:non-scaling-stroke">
<text vector-effect="non-scaling-stroke" transform="matrix(0.4685 0 0 1.0149 368.88 295.69)" x="0" y="0">C</text>
<text vector-effect="non-scaling-stroke" transform="matrix(0.9049 0 0 0.9792 413.79 301.62)" x="0" y="0">a</text>
<text vector-effect="non-scaling-stroke" transform="matrix(0.7363 0 0 1.0000 463.85 303.60)" x="0" y="0">n</text>
<text vector-effect="non-scaling-stroke" transform="matrix(0.7431 0 0 0.9957 506.27 310.60)" x="0" y="0">d</text>
<text vector-effect="non-scaling-stroke" transform="matrix(0.6654 0 0 1.1721 557.02 319.30)" x="0" y="0">y</text>
<ellipse cx="565.5" cy="331.5" rx="16.5" ry="12" transform="rotate(-38 565.5 331.5)" fill="none"/>
</g>
<g fill="#f86fe3" stroke="#f86fe3" stroke-width="9">
<text vector-effect="non-scaling-stroke" transform="matrix(0.4685 0 0 1.0149 357.88 296.69)" x="0" y="0">C</text>
<text vector-effect="non-scaling-stroke" transform="matrix(0.9049 0 0 0.9792 402.79 302.62)" x="0" y="0">a</text>
<text vector-effect="non-scaling-stroke" transform="matrix(0.7363 0 0 1.0000 452.85 304.60)" x="0" y="0">n</text>
<text vector-effect="non-scaling-stroke" transform="matrix(0.7431 0 0 0.9957 495.27 311.60)" x="0" y="0">d</text>
<text vector-effect="non-scaling-stroke" transform="matrix(0.6654 0 0 1.1721 546.02 320.30)" x="0" y="0">y</text>
<ellipse cx="554.5" cy="332.5" rx="16.5" ry="12" transform="rotate(-38 554.5 332.5)" fill="none"/>
</g></g>
<path d="M342.5 283.8c3-1.8 7-3.5 12.3-3.6 5 0 10 .5 15 1.2M374.5 283.3c10 .3 30 .2 50.5-.3M431.5 283.3c7-.6 14-.8 20-.4 6 .5 12 2 19 3.3M477.5 285.8c6-1.2 13-2.3 20-2.6 5 0 9 0 13.5.2M517.3 287c8-2.5 18-4.7 28-5.8 6-.6 12-.9 22-1M572.5 284.8c8-.5 16-.6 24.7-.5" fill="none" stroke="#120818" stroke-width="1.5" stroke-linecap="round"/>
<g font-family="'Liberation Serif',serif" font-style="italic" font-weight="bold" fill="#120818" font-size="10.5"><text x="369.8" y="284.6">c</text><text x="424.8" y="285.3">a</text><text x="470.3" y="288">n</text><text x="510.8" y="287.4" font-size="14">d</text><text x="567" y="286.6" font-size="12">y</text></g>
</g>
<g font-family="'Liberation Sans',sans-serif" font-size="9.6" fill="#222"><text x="352.5" y="480.5">@phamthikimha08</text><text x="352.5" y="493.5">#hd247</text></g>
<g stroke="#5050d0" stroke-width="1" stroke-opacity=".18" shape-rendering="crispEdges">
<path d="M353.50 65.6v456.6"/>
<path d="M366.42 65.6v456.6"/>
<path d="M379.34 65.6v456.6"/>
<path d="M392.26 65.6v456.6"/>
<path d="M405.18 65.6v456.6"/>
<path d="M418.10 65.6v456.6"/>
<path d="M431.02 65.6v456.6"/>
<path d="M443.94 65.6v456.6"/>
<path d="M456.86 65.6v456.6"/>
<path d="M469.78 65.6v456.6"/>
<path d="M482.70 65.6v456.6"/>
<path d="M495.62 65.6v456.6"/>
<path d="M508.54 65.6v456.6"/>
<path d="M521.46 65.6v456.6"/>
<path d="M534.38 65.6v456.6"/>
<path d="M547.30 65.6v456.6"/>
<path d="M560.22 65.6v456.6"/>
<path d="M573.14 65.6v456.6"/>
<path d="M586.06 65.6v456.6"/>
<path d="M340.0 78.30h257.4"/>
<path d="M340.0 91.23h257.4"/>
<path d="M340.0 104.16h257.4"/>
<path d="M340.0 117.09h257.4"/>
<path d="M340.0 130.02h257.4"/>
<path d="M340.0 142.95h257.4"/>
<path d="M340.0 155.88h257.4"/>
<path d="M340.0 168.81h257.4"/>
<path d="M340.0 181.74h257.4"/>
<path d="M340.0 194.67h257.4"/>
<path d="M340.0 207.60h257.4"/>
<path d="M340.0 220.53h257.4"/>
<path d="M340.0 233.46h257.4"/>
<path d="M340.0 246.39h257.4"/>
<path d="M340.0 259.32h257.4"/>
<path d="M340.0 272.25h257.4"/>
<path d="M340.0 285.18h257.4"/>
<path d="M340.0 298.11h257.4"/>
<path d="M340.0 311.04h257.4"/>
<path d="M340.0 323.97h257.4"/>
<path d="M340.0 336.90h257.4"/>
<path d="M340.0 349.83h257.4"/>
<path d="M340.0 362.76h257.4"/>
<path d="M340.0 375.69h257.4"/>
<path d="M340.0 388.62h257.4"/>
<path d="M340.0 401.55h257.4"/>
<path d="M340.0 414.48h257.4"/>
<path d="M340.0 427.41h257.4"/>
<path d="M340.0 440.34h257.4"/>
<path d="M340.0 453.27h257.4"/>
<path d="M340.0 466.20h257.4"/>
<path d="M340.0 479.13h257.4"/>
<path d="M340.0 492.06h257.4"/>
<path d="M340.0 504.99h257.4"/>
<path d="M340.0 517.92h257.4"/>
</g>
</svg>
</div>
<!-- ===== right panels ===== -->
<div class="abs" style="left:814px;top:0;width:4px;height:487px;background:#696c70"></div>
<div class="abs" style="left:816.8px;top:106px;width:1.7px;height:381px;background:#54585c"></div>
<div id="rightpanels" class="abs" style="left:817.5px;top:0;width:206.5px;height:487px;background:#d6dadd">
  <!-- Navigator -->
  <div class="panel" style="left:0;top:0;width:206px;height:108px;background:#d0d5d8">
    <div class="phead" style="height:13px"><span style="top:2.5px;left:-8px">Navigator</span>
      <div class="hic" style="left:188.5px;top:2px"><svg viewBox="0 0 7 7"><path d="M1.5 2.5v3h3M3 1.5h2.5V4M5.5 1.5L3.2 3.8" stroke="#9aa0a4" stroke-width=".7" fill="none"/></svg></div>
      <div class="hic" style="left:197px;top:2px"><svg viewBox="0 0 7 7"><path d="M1.8 1.8l3.4 3.4M5.2 1.8L1.8 5.2" stroke="#8b9195" stroke-width="1.1" fill="none"/></svg></div>
    </div>
    <div class="btn" style="left:2.4px;top:14.5px"><svg viewBox="0 0 13 13"><circle cx="5.5" cy="5.5" r="3.3" fill="none" stroke="#555" stroke-width="1"/><path d="M8 8l3 3" stroke="#555" stroke-width="1.3"/><text x="5.5" y="7.3" font-size="5" text-anchor="middle" fill="#444" font-family="'Liberation Sans',sans-serif">1</text></svg></div>
    <div class="sep" style="left:21.2px;top:17px;height:10px"></div>
    <div class="btn" style="left:24.4px;top:14.5px"><svg viewBox="0 0 13 13"><circle cx="5.5" cy="5.5" r="3.3" fill="none" stroke="#555" stroke-width="1"/><path d="M8 8l3 3" stroke="#555" stroke-width="1.3"/><path d="M3.8 5.5h3.4M5.5 3.8v3.4" stroke="#555" stroke-width="1"/></svg></div>
    <div class="btn" style="left:43.4px;top:14.5px"><svg viewBox="0 0 13 13"><rect x="1.5" y="2.5" width="10" height="8" fill="#6a6a6a"/><path d="M2.5 3.5h2.5l-2.5 2.5zM10.5 3.5v2.5l-2.5-2.5zM2.5 9.5v-2.5l2.5 2.5zM10.5 9.5h-2.5l2.5-2.5z" fill="#f0f0f0"/></svg></div>
    <div class="btn" style="left:61.9px;top:14.5px"><svg viewBox="0 0 13 13"><circle cx="5.5" cy="5.5" r="3.3" fill="none" stroke="#555" stroke-width="1"/><path d="M8 8l3 3" stroke="#555" stroke-width="1.3"/><path d="M3.8 5.5h3.4" stroke="#555" stroke-width="1"/></svg></div>
    <div class="sep" style="left:81.4px;top:17px;height:10px"></div>
    <div class="btn" style="left:84px;top:14.5px"><svg viewBox="0 0 13 13"><path d="M3.5 3A4.5 4.5 0 1 1 2 6.5" fill="none" stroke="#555" stroke-width="1.1"/><path d="M1.5 1.5l2.5 0 0 2.5z" fill="#555" stroke="#555" stroke-width=".8"/><circle cx="6.5" cy="6.5" r="2.3" fill="#555"/></svg></div>
    <div class="btn" style="left:103.4px;top:14.5px"><svg viewBox="0 0 13 13"><rect x="3" y="4" width="7" height="5" fill="#777"/><path d="M1.5 3v-1h1.5M10 2h1.5v1M1.5 10v1h1.5M10 11h1.5v-1" fill="none" stroke="#777" stroke-width=".8"/></svg></div>
    <div class="btn" style="left:121.8px;top:14.5px"><svg viewBox="0 0 13 13"><path d="M9.5 3A4.5 4.5 0 1 0 11 6.5" fill="none" stroke="#555" stroke-width="1.1"/><path d="M11.5 1.5l-2.5 0 0 2.5z" fill="#555" stroke="#555" stroke-width=".8"/><circle cx="6.5" cy="6.5" r="2.3" fill="#555"/></svg></div>
    <div class="sep" style="left:140.5px;top:17px;height:10px"></div>
    <div class="btn" style="left:144px;top:14.5px"><svg viewBox="0 0 13 13"><path d="M2 10.5v-5h3.5v5z" fill="#555"/><path d="M7.5 10.5v-5h3.5v5z" fill="#fff" stroke="#555" stroke-width=".9"/><path d="M3.5 4c.5-2 3-2.8 5-1.5" fill="none" stroke="#555" stroke-width=".9"/><path d="M8 1l1.5 1.7-2 .6z" fill="#555"/></svg></div>
    <!-- preview -->
    <div class="abs" style="left:0;top:32.5px;width:206px;height:75.5px;background:#696c70"></div>
    <svg class="abs" style="left:50px;top:32.5px" width="106" height="74" viewBox="868 81.5 106 74">
      <rect x="901.2" y="82.5" width="40.2" height="71.2" fill="#fff"/>
      <g fill="#fbaaba" fill-opacity=".42">
        <path d="M901.2 82.5h2.7v71.2h-2.7zM906.8 82.5h2.8v71.2h-2.8zM912.4 82.5h2.8v71.2h-2.8zM918 82.5h2.8v71.2h-2.8zM923.6 82.5h2.8v71.2h-2.8zM929.2 82.5h2.8v71.2h-2.8zM934.8 82.5h2.8v71.2h-2.8zM940.4 82.5h1v71.2h-1z"/>
        <path d="M901.2 82.5h40.2v1.1h-40.2zM901.2 86.4h40.2v2.8h-40.2zM901.2 92h40.2v2.8h-40.2zM901.2 97.6h40.2v2.8h-40.2zM901.2 103.2h40.2v2.8h-40.2zM901.2 108.8h40.2v2.8h-40.2zM901.2 114.4h40.2v2.8h-40.2zM901.2 120h40.2v2.8h-40.2zM901.2 125.6h40.2v2.8h-40.2zM901.2 131.2h40.2v2.8h-40.2zM901.2 136.8h40.2v2.8h-40.2zM901.2 142.4h40.2v2.8h-40.2zM901.2 148h40.2v2.8h-40.2z"/>
      </g>
      <g fill="#f86fe3"><circle cx="911.2" cy="95.6" r="1.5"/><circle cx="905.7" cy="101.5" r="3.6"/><circle cx="902.6" cy="107.3" r="1.4"/><circle cx="931.4" cy="129.6" r="1.5"/><circle cx="936.2" cy="133.9" r="3.6"/><circle cx="940.2" cy="139.2" r="1.2"/></g>
      <text x="903.5" y="118.3" font-family="'Liberation Sans',sans-serif" font-weight="bold" font-style="italic" font-size="14" fill="#f57ae0" textLength="33" lengthAdjust="spacingAndGlyphs">Candy</text>
      <path d="M901.5 115.5h39.5" stroke="#333" stroke-width=".5"/>
      <text x="903" y="148.5" font-family="'Liberation Sans',sans-serif" font-size="2.2" fill="#666">@phamthikimha08</text>
      <rect x="868.5" y="82" width="104.5" height="72" fill="none" stroke="#e03a32" stroke-width="1"/>
    </svg>
  </div>
  <div class="abs" style="left:0;top:106px;width:206.5px;height:1.5px;background:#5a5e62"></div>
  <!-- Layer panel -->
  <div class="panel" style="left:0;top:107.5px;width:206px;height:272px">
    <div class="phead" style="height:13px;border-top:1.5px solid #4a9fd8"><span style="top:2px;left:-8px">Layer</span>
      <div class="hic" style="left:188.5px;top:2px"><svg viewBox="0 0 7 7"><path d="M1.5 2.5v3h3M3 1.5h2.5V4M5.5 1.5L3.2 3.8" stroke="#9aa0a4" stroke-width=".7" fill="none"/></svg></div>
      <div class="hic" style="left:197px;top:2px"><svg viewBox="0 0 7 7"><path d="M1.8 1.8l3.4 3.4M5.2 1.8L1.8 5.2" stroke="#8b9195" stroke-width="1.1" fill="none"/></svg></div>
    </div>
    <div class="t n" style="left:3.5px;top:18px;font-size:7.2px;color:#333">Opacity</div>
    <div class="abs" style="left:55px;top:16.5px;width:120px;height:10.5px;background:linear-gradient(to right,#cfe8f8,#5db6ee 50%,#0f96e6);border:1px solid #8fb6cf"></div>
    <div class="t" style="left:179px;top:17.5px;font-size:7.6px;color:#333">100 %</div>
    <div class="t n" style="left:3.5px;top:34px;font-size:7.2px;color:#333">Blending</div>
    <div class="abs" style="left:56.5px;top:30.2px;width:146.5px;height:13.2px;background:#fff;border:1px solid #c0c5c8;border-radius:1.5px"></div>
    <div class="t n" style="left:59px;top:33.5px;font-size:7.2px;color:#333">Normal</div>
    <svg class="abs" style="left:195px;top:35px" width="5" height="4" viewBox="0 0 5 4"><path d="M1 1l1.5 1.5L4 1" fill="none" stroke="#b4b9bd" stroke-width=".7"/></svg>
    <div class="abs" style="left:5px;top:50px;width:6.5px;height:6.5px;background:#d3d7da;border:1px solid #b3b8bc"></div>
    <div class="t n" style="left:16px;top:50px;font-size:7.2px;color:#a5aaae">Protect Alpha</div>
    <div class="abs" style="left:73px;top:49.8px;width:7px;height:7px;background:#fff;border:1px solid #555"></div>
    <div class="t n" style="left:84px;top:50px;font-size:7.2px;color:#333">Clipping</div>
    <div class="abs" style="left:140.5px;top:49.8px;width:7px;height:7px;background:#fff;border:1px solid #555"></div>
    <div class="t n" style="left:151.5px;top:50px;font-size:7.2px;color:#333">Lock</div>
    <!-- layer list -->
    <div class="abs" style="left:0;top:61.5px;width:206px;height:188px;background:#808080"></div>
    <div class="abs" style="left:1.3px;top:61.5px;width:193.2px;height:133.5px;background:#fff;font-size:8px;color:#222">
      <div class="abs" style="left:13.2px;top:0;width:180px;height:26.7px;background:#70c4f4"></div>
      <div class="abs" style="left:0;top:0;width:193.2px;height:1px;background:#4a4a4a"></div>
      <div class="abs" style="left:0;top:0;width:1px;height:133.5px;background:#3c3c3c"></div>
      <div class="abs" style="left:12.5px;top:0;width:1px;height:133.5px;background:#3c3c3c"></div>
      <div class="abs" style="left:0;top:26.7px;width:193.2px;height:1px;background:#3c3c3c"></div>
      <div class="abs" style="left:0;top:53.7px;width:193.2px;height:1px;background:#3c3c3c"></div>
      <div class="abs" style="left:0;top:80px;width:193.2px;height:1px;background:#8a8a8a"></div>
      <div class="abs" style="left:0;top:106.9px;width:193.2px;height:1px;background:#3c3c3c"></div>
      <div class="abs" style="left:3.7px;top:10.3px;width:5.6px;height:5.6px;border-radius:50%;background:#c9c9c9;border:1px solid #b4b4b4"></div>
      <div class="abs" style="left:3.7px;top:37px;width:5.6px;height:5.6px;border-radius:50%;background:#c9c9c9;border:1px solid #b4b4b4"></div>
      <div class="abs" style="left:3.7px;top:63.6px;width:5.6px;height:5.6px;border-radius:50%;background:#c9c9c9;border:1px solid #b4b4b4"></div>
      <div class="abs" style="left:3.7px;top:90.2px;width:5.6px;height:5.6px;border-radius:50%;background:#c9c9c9;border:1px solid #b4b4b4"></div>
      <div class="abs" style="left:3.7px;top:116.8px;width:5.6px;height:5.6px;border-radius:50%;background:#c9c9c9;border:1px solid #b4b4b4"></div>
      <!-- thumbs -->
      <div class="abs checker thc" style="left:22.5px;top:9.5px;width:24.5px;height:8px;border:.5px solid #555;background-size:4.4px 4.4px;background-position:0 0,2.2px 2.2px"></div>
      <div class="abs checker thc" style="left:27.8px;top:27.5px;width:13px;height:25px;background-size:4.4px 4.4px;background-position:0 0,2.2px 2.2px"></div>
      <div class="abs checker thc" style="left:27.8px;top:54.2px;width:13px;height:25px;background-size:4.4px 4.4px;background-position:0 0,2.2px 2.2px"></div>
      <div class="abs checker thc" style="left:27.8px;top:80.8px;width:13px;height:25px;background-size:4.4px 4.4px;background-position:0 0,2.2px 2.2px"></div>
      <div class="abs" style="left:27.8px;top:107.5px;width:13px;height:25px;background:#fde4e9;background-image:linear-gradient(rgba(250,150,170,.3) 50%,transparent 50%),linear-gradient(to right,rgba(250,150,170,.3) 50%,transparent 50%);background-size:2px 2px"></div>
      <svg class="abs" style="left:27.8px;top:54.2px" width="13" height="52" viewBox="0 0 13 52"><g fill="#f36fdc"><circle cx="1.8" cy="5.5" r="1.2"/><circle cx="11.5" cy="17.5" r="1.2"/><circle cx="1.8" cy="32" r="1.2"/><circle cx="11.5" cy="44" r="1.2"/></g><text x=".5" y="13" font-size="5.5" font-style="italic" font-weight="bold" fill="#f36fdc" font-family="'Liberation Sans',sans-serif" textLength="12" lengthAdjust="spacingAndGlyphs">Candy</text><text x=".5" y="39.5" font-size="5.5" font-style="italic" font-weight="bold" fill="#f36fdc" font-family="'Liberation Sans',sans-serif" textLength="12" lengthAdjust="spacingAndGlyphs">Candy</text></svg>
      <!-- locks -->
      <svg class="abs" style="left:17.8px;top:62px" width="6" height="8" viewBox="0 0 6 8"><rect x=".5" y="3" width="5" height="4.5" fill="#fff" stroke="#333" stroke-width=".9"/><path d="M1.7 3V1.8a1.3 1.3 0 012.6 0V3" fill="none" stroke="#333" stroke-width=".9"/><rect x="2.4" y="4.3" width="1.2" height="1.8" fill="#333"/></svg>
      <svg class="abs" style="left:17.8px;top:88.5px" width="6" height="8" viewBox="0 0 6 8"><rect x=".5" y="3" width="5" height="4.5" fill="#fff" stroke="#333" stroke-width=".9"/><path d="M1.7 3V1.8a1.3 1.3 0 012.6 0V3" fill="none" stroke="#333" stroke-width=".9"/><rect x="2.4" y="4.3" width="1.2" height="1.8" fill="#333"/></svg>
      <svg class="abs" style="left:17.8px;top:115.2px" width="6" height="8" viewBox="0 0 6 8"><rect x=".5" y="3" width="5" height="4.5" fill="#fff" stroke="#333" stroke-width=".9"/><path d="M1.7 3V1.8a1.3 1.3 0 012.6 0V3" fill="none" stroke="#333" stroke-width=".9"/><rect x="2.4" y="4.3" width="1.2" height="1.8" fill="#333"/></svg>
      <!-- names -->
      <div class="t" style="left:57.5px;top:9px;font-weight:bold;color:#111;font-size:9.2px;letter-spacing:-.1px">@phamthikimha08</div>
      <div class="t" style="left:57.5px;top:37.3px">Layer4</div>
      <div class="t" style="left:57.5px;top:64px">Layer2</div>
      <div class="t" style="left:57.5px;top:90.4px">Layer2</div>
      <div class="t" style="left:57.5px;top:117.2px">Layer1</div>
      <svg class="abs" style="left:179px;top:7.5px" width="11" height="11" viewBox="0 0 10 10"><g fill="#fff"><circle cx="5" cy="5" r="3.3"/><g stroke="#fff" stroke-width="1.8"><path d="M5 .3v9.4M.3 5h9.4M1.7 1.7l6.6 6.6M8.3 1.7L1.7 8.3"/></g></g><circle cx="5" cy="5" r="1.3" fill="#70c4f4"/></svg>
    </div>
    <!-- list scrollbar -->
    <div class="abs" style="left:194.5px;top:61.5px;width:11.5px;height:188px;background:#d3d7da"></div>
    <div class="abs" style="left:195.8px;top:67.5px;width:9.7px;height:176.5px;background:#b9bec2;border:.5px solid #a1a6aa;border-radius:2.5px"></div>
    <!-- layer toolbar -->
    <div class="abs" style="left:0;top:249.5px;width:206.5px;height:22px;background:#ced3d6"></div>
    <div class="btn" style="left:3.5px;top:251.7px"><svg viewBox="0 0 13 13"><path d="M3.5 2h4.5l2 2v7h-6.5z" fill="#fff" stroke="#666" stroke-width=".9" stroke-linejoin="round"/></svg></div>
    <div class="btn" style="left:22.3px;top:251.7px"><svg viewBox="0 0 13 13"><path d="M3.5 2h4.5l2 2v7h-6.5z" fill="#fff" stroke="#666" stroke-width=".9" stroke-linejoin="round"/><text x="6.7" y="9.8" font-size="5" text-anchor="middle" fill="#555" font-family="'Liberation Sans',sans-serif">8</text></svg></div>
    <div class="btn" style="left:40.7px;top:251.7px"><svg viewBox="0 0 13 13"><path d="M3.5 2h4.5l2 2v7h-6.5z" fill="#fff" stroke="#666" stroke-width=".9" stroke-linejoin="round"/><text x="6.7" y="9.8" font-size="5" text-anchor="middle" fill="#555" font-family="'Liberation Sans',sans-serif">1</text></svg></div>
    <div class="btn" style="left:59.3px;top:251.7px;width:18.5px;border-color:#d3d7da;background:linear-gradient(to right,#dfe2e4,#fbfbfc 45%,#dfe2e4)"><svg viewBox="0 0 13 13"><path d="M10.5 7h3l-1.5 1.8z" fill="#444"/></svg></div>
    <div class="btn" style="left:80.4px;top:251.7px;width:16px"><svg viewBox="0 0 13 13" style="width:14px"><path d="M2.5 3.5h3.5l1 1.2h4.5v6h-9z" fill="#555"/></svg></div>
    <div class="sep" style="left:99.6px;top:254px;height:10px"></div>
    <div class="btn" style="left:103.2px;top:251.7px"><svg viewBox="0 0 13 13"><path d="M5 2.5h6v6h-6z" fill="#fff" stroke="#666" stroke-width=".9"/><path d="M2.5 5h6v6h-6z" fill="#fff" stroke="#666" stroke-width=".9"/></svg></div>
    <div class="btn" style="left:121.6px;top:251.7px"><svg viewBox="0 0 13 13"><path d="M2.5 2.5h3.5v3h-3.5zM2.5 7.5h3.5v3h-3.5z" fill="#fff" stroke="#888" stroke-width=".8"/><path d="M7.5 5.5h4v2h-4z" fill="#999"/></svg></div>
    <div class="sep" style="left:140.4px;top:254px;height:10px"></div>
    <div class="btn" style="left:144.1px;top:251.7px"><svg viewBox="0 0 13 13"><path d="M3.3 4.5h6.4v6.5h-6.4z" fill="#fff" stroke="#444" stroke-width="1"/><path d="M2.3 4.3h8.4M5 4V2.6h3V4" fill="none" stroke="#444" stroke-width="1.1"/><path d="M5.3 5.5v4.5M7.7 5.5v4.5" stroke="#444" stroke-width="1"/></svg></div>
  </div>
  <div class="abs" style="left:0;top:378.6px;width:206px;height:1.8px;background:#54585c"></div>
  <!-- Reference panel -->
  <div class="panel" style="left:0;top:380.4px;width:206px;height:107px">
    <div class="phead" style="height:12px;border-top:1.2px solid #8ec0dd"><span style="top:2px;left:-8px">Reference</span>
      <div class="hic" style="left:188.5px;top:1.5px"><svg viewBox="0 0 7 7"><path d="M1.5 2.5v3h3M3 1.5h2.5V4M5.5 1.5L3.2 3.8" stroke="#9aa0a4" stroke-width=".7" fill="none"/></svg></div>
      <div class="hic" style="left:197px;top:1.5px"><svg viewBox="0 0 7 7"><path d="M1.8 1.8l3.4 3.4M5.2 1.8L1.8 5.2" stroke="#8b9195" stroke-width="1.1" fill="none"/></svg></div>
    </div>
    <div class="btn" style="left:2.4px;top:14.2px"><svg viewBox="0 0 13 13"><path d="M3.3 7.5a2.2 2.2 0 01.5-4.3 3 3 0 015.6.3 2 2 0 01.3 4z" fill="#555"/><path d="M6.5 6v5.5M4.5 9.5l2 2.2 2-2.2" stroke="#555" stroke-width="1.4" fill="none"/></svg></div>
    <div class="btn" style="left:20.8px;top:14.2px;width:15.5px"><svg viewBox="0 0 13 13"><path d="M1.8 3h3.2l1 1.2h4.5v1.3h-6.5l-2.2 4.5z" fill="#555"/><path d="M4.3 6.2h7.7l-2 4.3h-8z" fill="#fff" stroke="#555" stroke-width=".8" stroke-linejoin="round"/></svg></div>
    <div class="btn" style="left:39.6px;top:14.2px"><svg viewBox="0 0 13 13"><path d="M4 4l5 5M9 4l-5 5" stroke="#9a9fa3" stroke-width="1.2"/></svg></div>
    <div class="sep" style="left:58.5px;top:16.5px;height:10px"></div>
    <div class="btn" style="left:62px;top:14.2px"><svg viewBox="0 0 13 13"><circle cx="5.5" cy="5.5" r="3.3" fill="none" stroke="#9a9fa3" stroke-width="1"/><path d="M8 8l3 3" stroke="#9a9fa3" stroke-width="1.3"/><path d="M3.8 5.5h3.4M5.5 3.8v3.4" stroke="#9a9fa3" stroke-width="1"/></svg></div>
    <div class="btn" style="left:80.8px;top:14.2px"><svg viewBox="0 0 13 13"><rect x="1.5" y="2.5" width="10" height="8" fill="#a9aeb2"/><path d="M2.5 3.5h2.5l-2.5 2.5zM10.5 3.5v2.5l-2.5-2.5zM2.5 9.5v-2.5l2.5 2.5zM10.5 9.5h-2.5l2.5-2.5z" fill="#f0f0f0"/></svg></div>
    <div class="btn" style="left:99.2px;top:14.2px"><svg viewBox="0 0 13 13"><circle cx="5.5" cy="5.5" r="3.3" fill="none" stroke="#9a9fa3" stroke-width="1"/><path d="M8 8l3 3" stroke="#9a9fa3" stroke-width="1.3"/><path d="M3.8 5.5h3.4" stroke="#9a9fa3" stroke-width="1"/></svg></div>
    <div class="sep" style="left:118px;top:16.5px;height:10px"></div>
    <div class="btn" style="left:121.6px;top:14.2px"><svg viewBox="0 0 13 13"><path d="M2.5 11l.7-2.5 5-5 1.8 1.8-5 5z" fill="#fff" stroke="#888" stroke-width=".9" stroke-linejoin="round"/><path d="M9 2.5l1-1c.8-.5 2.2.9 1.7 1.7l-1 1z" fill="#c55"/></svg></div>
    <div class="btn" style="left:140px;top:13.8px;width:16.2px;height:16.2px;background:#0c9ee9;border-color:#0c9ee9;box-shadow:none"><svg viewBox="0 0 17 17" style="width:14px;height:14px"><path d="M5.300 9.500V4.300M7.500 8.500V2.800M9.700 8.500V3M11.900 9V4.600" stroke="#fff" stroke-width="1.650" stroke-linecap="round" fill="none"/><path d="M4.500 8.300h8.200v3.200c0 1.900-.9 3.300-1.900 4H6.400C5 14.500 3.100 12.100 1.900 10.300c-.5-.9.600-1.600 1.400-.8L4.500 10.900z" fill="#fff"/></svg></div>
    <div class="sep" style="left:159.2px;top:16.5px;height:10px"></div>
    <div class="btn" style="left:162.3px;top:14.2px;width:16px"><svg viewBox="0 0 13 13" style="width:14px"><circle cx="6.5" cy="6.5" r="4.3" fill="none" stroke="#a9aeb2" stroke-width="1"/><circle cx="6.5" cy="6.5" r="2.3" fill="#a9aeb2"/></svg></div>
    <div class="abs" style="left:199px;top:13.8px;width:7px;height:16px;background:linear-gradient(to right,#fff,#eceef0);border-radius:1px"></div>
    <div class="abs checker" style="left:.5px;top:32.5px;width:205.5px;height:74.5px;background-image:linear-gradient(45deg,#e3e3e3 25%,transparent 25%,transparent 75%,#e3e3e3 75%),linear-gradient(45deg,#e3e3e3 25%,transparent 25%,transparent 75%,#e3e3e3 75%);background-size:6.4px 6.4px;background-position:0 0,3.2px 3.2px"></div>
  </div>
</div>
</div><!-- /main -->
<!-- ===== status bar ===== -->
<div id="statusbar" class="abs" style="font-size:9.1px;color:#333">
  <div class="t n" style="left:3.5px;top:2.1px;transform:scaleX(.855)">564 * 1002 pixel</div>
  <div class="t n" style="left:65.6px;top:2.1px;transform:scaleX(.84)">(19.9 * 35.3cm)</div>
  <div class="t n" style="left:125px;top:2.1px;transform:scaleX(.82)">72 dpi</div>
  <div class="t n" style="left:154.3px;top:2.1px;transform:scaleX(.8)">85 %</div>
  <div class="t n" style="left:177.7px;top:2.1px;transform:scaleX(.82)">( 139, 568 )</div>
</div>
<!-- ===== taskbar ===== -->
<div id="taskbar" class="abs" style="background:linear-gradient(to right,#404040 0%,#424242 38%,#493f3b 45%,#444242 50%,#454545 60%,#4a403c 65%,#4a413d 69%,#424141 75%,#3f3f3f 100%)">
  <!-- start -->
  <svg class="abs" style="left:10.7px;top:8.2px" width="11" height="10.5" viewBox="0 0 11 10.5"><path d="M0 1.4l4.6-.6v4.2h-4.6zM5.3.7l5.7-.7v5h-5.7zM0 5.7h4.6v4.2l-4.6-.6zM5.3 5.7h5.7v4.8l-5.7-.7z" fill="#fff"/></svg>
  <!-- search -->
  <svg class="abs" style="left:42px;top:6px" width="14" height="14" viewBox="0 0 14 14"><circle cx="7.6" cy="5.8" r="3.7" fill="none" stroke="#fff" stroke-width="1.1"/><path d="M5 8.5l-3.5 4" stroke="#fff" stroke-width="1.2"/></svg>
  <!-- cortana -->
  <svg class="abs" style="left:73px;top:7px" width="13" height="13" viewBox="0 0 13 13"><circle cx="6.6" cy="6.5" r="4.5" fill="none" stroke="#fff" stroke-width="1.5"/></svg>
  <!-- task view -->
  <svg class="abs" style="left:106px;top:8.5px" width="13" height="10" viewBox="0 0 13 10"><path d="M.8 2.5v-1.5h7v1.5M.8 6.5v2h7v-2" fill="none" stroke="#fff" stroke-width="1.1"/><path d="M9.8.5v9M11.8 3v4" stroke="#fff" stroke-width="1.1"/><path d="M.8 4.5h7" stroke="#fff" stroke-width="1.3"/></svg>
  <!-- store -->
  <svg class="abs" style="left:137.5px;top:6px" width="17" height="17" viewBox="0 0 17 17"><path d="M5.5 5V3.5a3 3 0 016 0V5" fill="none" stroke="#f4f4f4" stroke-width="1.1"/><path d="M.8 5h15.4v9.8a1 1 0 01-1 1h-13.4a1 1 0 01-1-1z" fill="#f7f7f7"/><rect x="5.3" y="7.3" width="2.9" height="2.9" fill="#f25022"/><rect x="8.8" y="7.3" width="2.9" height="2.9" fill="#7fba00"/><rect x="5.3" y="10.8" width="2.9" height="2.9" fill="#00a4ef"/><rect x="8.8" y="10.8" width="2.9" height="2.9" fill="#ffb900"/></svg>
  <!-- chrome -->
  <svg class="abs" style="left:171.3px;top:5.8px" width="15.6" height="15.6" viewBox="0 0 16 16"><circle cx="8" cy="8" r="7.8" fill="#fff"/><path d="M8 8L1.250 4.1A7.8 7.8 0 0114.750 4.1z" fill="#e53f30"/><path d="M8 8L14.750 4.1A7.8 7.8 0 018 15.8z" fill="#fbc116"/><path d="M8 8L8 15.8A7.8 7.8 0 011.250 4.1z" fill="#2da14a"/><path d="M8 4.5h6.6" stroke="#e53f30" stroke-width="1"/><circle cx="8" cy="8" r="3.7" fill="#fff"/><circle cx="8" cy="8" r="2.9" fill="#4a8af4"/></svg>
  <!-- explorer -->
  <svg class="abs" style="left:204.5px;top:6.3px" width="16" height="14" viewBox="0 0 16 14"><path d="M.3 1.2a.8.8 0 01.8-.8h4.5l1.3 1.5h8a.8.8 0 01.8.8v2h-15.4z" fill="#e8a41c"/><path d="M.3 3.5h15.4v9.3a.8.8 0 01-.8.8h-13.8a.8.8 0 01-.8-.8z" fill="#fbd045"/><path d="M4.5 8h7v5.6h-7z" fill="#4a9fe0"/><path d="M6 10h4v3.6h-4z" fill="#fbd045"/></svg>
  <!-- mail -->
  <svg class="abs" style="left:236.5px;top:6.5px" width="20" height="17" viewBox="0 0 20 17"><path d="M.5 5.5l8-5 8 5v8.5h-16z" fill="#1f7fd1"/><path d="M.5 5.5l8 5 8-5v8.5h-16z" fill="#3ea2ea"/><path d="M.5 14l8-5.5 8 5.5z" fill="#2a8fdd"/><circle cx="16.7" cy="11.6" r="3.9" fill="#2d2d2d" stroke="#9a9a9a" stroke-width=".5"/><text x="16.7" y="13.9" font-size="6.5" font-weight="bold" fill="#fff" text-anchor="middle" font-family="'Liberation Sans',sans-serif">1</text></svg>
  <!-- edge -->
  <svg class="abs" style="left:270px;top:5.3px" width="16.5" height="16.5" viewBox="0 0 17 17"><defs><linearGradient id="eg" x1="0" y1="0" x2="1" y2="1"><stop offset="0" stop-color="#35c1a0"/><stop offset=".5" stop-color="#1b9de2"/><stop offset="1" stop-color="#0c59a4"/></linearGradient></defs><path d="M8.5.5a8 8 0 017.9 7c.2 2.5-1.6 4-3.8 4-1.5 0-2.3-.8-2-1.8.6-1.5-.5-3.7-3-3.7-2.8 0-4.8 2.5-4.3 5.5.5 2.8 3 5 6.5 4.8A8 8 0 118.5.5z" fill="url(#eg)"/><path d="M3.3 11.5c.5 2.8 3 5 6.5 4.8 2-.2 3.7-1.2 4.8-2.6-3 1.2-6.3.2-7.3-2.5-.7-2 .3-4.2 2-4.9-3.3-.8-6.5 1.7-6 5.2z" fill="#0d61b0"/></svg>
  <!-- jump paint (active) -->
  <div class="abs" style="left:295.4px;top:0;width:32.6px;height:27px;background:#5c5c5c"></div>
  <svg class="abs" style="left:303.5px;top:6.3px" width="16" height="14" viewBox="0 0 16 14"><rect width="16" height="14" rx="1" fill="#f4f4f4"/><text x="8" y="6" font-size="5.2" font-weight="bold" fill="#d81e2c" text-anchor="middle" font-family="'Liberation Sans',sans-serif" textLength="12.5" lengthAdjust="spacingAndGlyphs">JUMP</text><rect x="2" y="7.3" width="12" height="4.8" fill="#1a1a1a"/><text x="8" y="11.3" font-size="4.2" font-weight="bold" fill="#fff" text-anchor="middle" font-family="'Liberation Sans',sans-serif" textLength="10" lengthAdjust="spacingAndGlyphs">PAINT</text></svg>
  <!-- teams -->
  <svg class="abs" style="left:335px;top:5.5px" width="18" height="17" viewBox="0 0 18 17"><circle cx="12.8" cy="3.6" r="2.6" fill="#7b83eb"/><circle cx="8" cy="3" r="2.8" fill="#5a62c3"/><path d="M10.5 6.5h6a1 1 0 011 1v4.5a3.5 3.5 0 01-7 0z" fill="#5059c9"/><path d="M4 6.5h8.5v6.5a4.2 4.2 0 01-8.5 0z" fill="#7b83eb"/><rect x="0" y="4.5" width="8.8" height="8.8" rx="1" fill="#4b53bc"/><text x="4.4" y="11.3" font-size="6.8" font-weight="bold" fill="#fff" text-anchor="middle" font-family="'Liberation Sans',sans-serif">T</text><circle cx="14.3" cy="13.2" r="3.4" fill="#d92b3a" stroke="#3a3a3a" stroke-width=".5"/><path d="M12.4 13.2h3.8" stroke="#fff" stroke-width="1.3"/></svg>
  <!-- running indicators -->
  <div class="abs" style="left:166px;top:25.5px;width:26.7px;height:1.5px;background:#76b9ed"></div>
  <div class="abs" style="left:295.4px;top:25.5px;width:32.6px;height:1.5px;background:#8cc4f0"></div>
  <div class="abs" style="left:331.3px;top:25.5px;width:26.4px;height:1.5px;background:#76b9ed"></div>
  <!-- weather -->
  <svg class="abs" style="left:763px;top:8px" width="16" height="12" viewBox="0 0 16 12"><path d="M3.4 9.6a3.1 3.1 0 01.3-6.2 4.2 4.2 0 018-.2 3 3 0 01.3 6.4z" fill="#eef4fa"/><path d="M3.3 9.9a1.8 1.8 0 011-3.3 2.8 2.8 0 015.2.6 1.7 1.7 0 01.3 3.3h-5.3a2 2 0 01-1.2-.6z" fill="#a9d3f3"/><path d="M5.3 10.6l-.5 1.2M7.3 10.6l-.5 1.2M9.3 10.6l-.5 1.2" stroke="#5aa8e8" stroke-width=".8"/></svg>
  <div class="t" style="left:784.3px;top:9.8px;font-size:9.6px;color:#fff">82°F</div>
  <div class="t" style="left:808.9px;top:9.8px;font-size:9.6px;color:#fff">Light rain</div>
  <svg class="abs" style="left:859.5px;top:11px" width="9" height="6" viewBox="0 0 9 6"><path d="M.7 5l3.8-4 3.8 4" fill="none" stroke="#fff" stroke-width="1"/></svg>
  <svg class="abs" style="left:875.5px;top:8.5px" width="10" height="10" viewBox="0 0 10 10"><g fill="none" stroke="#fff"><path d="M1 9.5a8 8 0 018-8" stroke-width=".8" stroke-opacity=".75"/><path d="M3.3 9.5a5.7 5.7 0 015.7-5.7" stroke-width=".9"/><path d="M5.8 9.5a3.2 3.2 0 013.2-3.2" stroke-width=".9"/></g><circle cx="8.4" cy="9" r=".9" fill="#fff"/></svg>
  <svg class="abs" style="left:890.5px;top:8.5px" width="12" height="10" viewBox="0 0 12 10"><path d="M.8 3.5h2l2.7-2.5v8l-2.7-2.5h-2z" fill="none" stroke="#fff" stroke-width=".9" stroke-linejoin="round"/><path d="M7.3 3.3a2.5 2.5 0 010 3.4M8.8 2a4.5 4.5 0 010 6M10.3.8a6.3 6.3 0 010 8.4" fill="none" stroke="#fff" stroke-width=".7" stroke-opacity=".7"/></svg>
  <svg class="abs" style="left:906.5px;top:10.5px" width="11.5" height="7" viewBox="0 0 11.5 7"><rect x=".5" y=".5" width="9.5" height="6" fill="none" stroke="#fff" stroke-width="1"/><rect x="1.5" y="1.5" width="2.5" height="4" fill="#fff"/><rect x="10.3" y="2.3" width="1" height="2.4" fill="#fff"/></svg>
  <div class="t" style="left:924.5px;top:10.3px;font-size:8px;color:#fff;transform:scaleX(.9);transform-origin:0 0">ENG</div>
  <div class="t" style="left:952.6px;top:3.5px;font-size:8.2px;color:#fff;transform:scaleX(.93);transform-origin:0 0">3:29 PM</div>
  <div class="t" style="left:948.6px;top:16px;font-size:8.2px;color:#fff;transform:scaleX(.93);transform-origin:0 0">9/28/2021</div>
  <svg class="abs" style="left:996.5px;top:7.8px" width="12" height="11.5" viewBox="0 0 12 11.5"><path d="M.6.6h10.8v8h-4.4l-2 2.3v-2.3h-4.4z" fill="none" stroke="#fff" stroke-width="1"/></svg>
</div>
</body>
</html>
